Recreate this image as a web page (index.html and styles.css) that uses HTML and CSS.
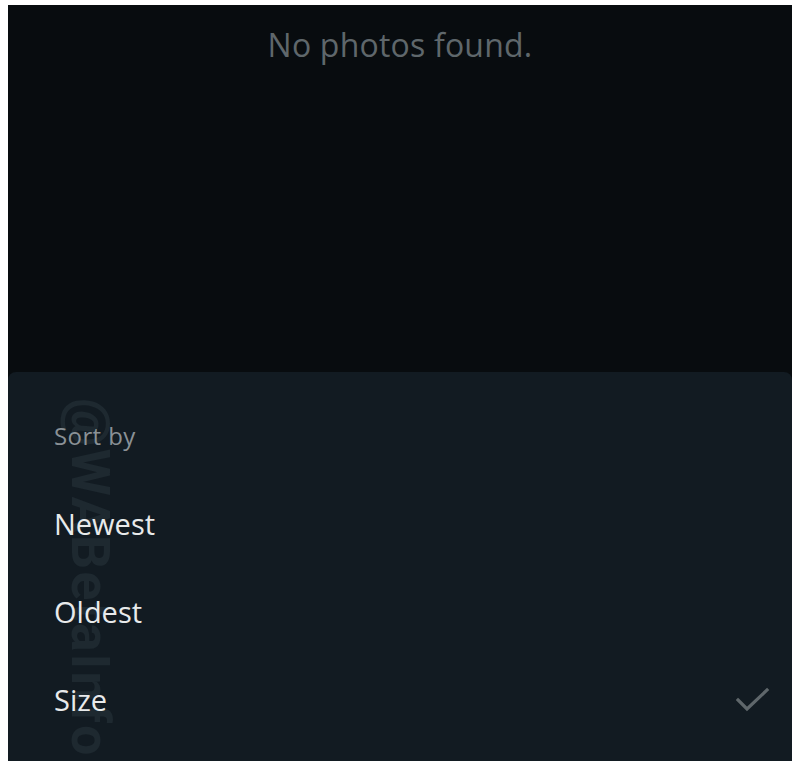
FILE: index.html
```html
<!DOCTYPE html>
<html>
<head>
<meta charset="utf-8">
<link rel="stylesheet" href="styles.css">
</head>
<body>
<div class="screen">
  <div class="empty">
    <p class="empty-text">No photos found.</p>
  </div>
  <div class="sheet">
    <div class="watermark">@WABetaInfo</div>
    <div class="sheet-title">Sort by</div>
    <div class="option">Newest</div>
    <div class="option">Oldest</div>
    <div class="option">Size
      <svg class="check" width="34" height="26" viewBox="0 0 34 26"><path d="M2 13 L11 22 L31 3" fill="none" stroke="#5f676b" stroke-width="3.2" stroke-linecap="square"/></svg>
    </div>
  </div>
</div>
</body>
</html>
```
FILE: styles.css
```css
html, body {
  margin: 0;
  padding: 0;
  background: #ffffff;
}
body {
  padding: 5px 8px 0 8px;
  font-family: "Open Sans", "Noto Sans", sans-serif;
}
.screen {
  width: 784px;
  height: 756px;
  background: #080c0f;
  display: flex;
  flex-direction: column;
  overflow: hidden;
}
.empty {
  height: 367px;
  flex: none;
}
.empty-text {
  margin: 20px 0 0 0;
  text-align: center;
  color: #5f676b;
  font-size: 32px;
  line-height: 40px;
  letter-spacing: 0.2px;
}
.sheet {
  position: relative;
  flex: 1;
  background: #121b22;
  border-radius: 8px 8px 0 0;
  padding: 49px 0 0 46px;
  overflow: hidden;
}
.sheet-title {
  position: relative;
  color: #8a9196;
  font-size: 24px;
  line-height: 30px;
  letter-spacing: 0.4px;
  margin-bottom: 29px;
}
.option {
  display: flex;
  align-items: center;
  justify-content: space-between;
  color: #e8eaeb;
  font-size: 29px;
  line-height: 36px;
  height: 88px;
  padding-right: 22px;
  position: relative;
}
.check {
  display: block;
}
.watermark {
  position: absolute;
  left: 58px;
  top: 26px;
  writing-mode: vertical-rl;
  font-family: "Roboto", sans-serif;
  font-weight: bold;
  font-size: 54px;
  line-height: 48px;
  letter-spacing: 2px;
  color: #1e2930;
  white-space: nowrap;
}
```
